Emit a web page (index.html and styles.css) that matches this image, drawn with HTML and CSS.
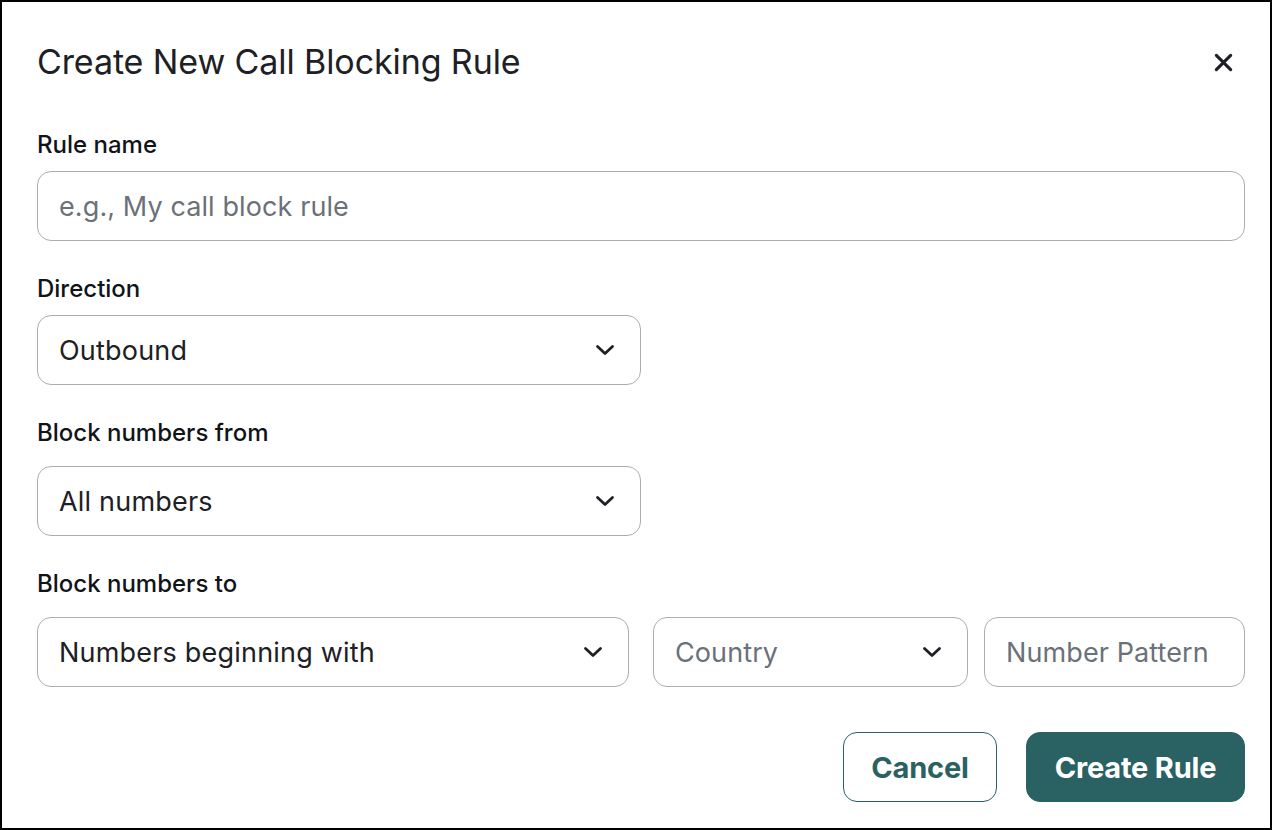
FILE: index.html
```html
<!DOCTYPE html>
<html lang="en">
<head>
<meta charset="utf-8">
<title>Create New Call Blocking Rule</title>
<link rel="stylesheet" href="styles.css">
</head>
<body>
<div class="dialog">
  <div class="dialog-header">
    <h1 class="dialog-title">Create New Call Blocking Rule</h1>
    <button class="close-btn" aria-label="Close">
      <svg viewBox="0 0 20 20" width="21" height="21"><path d="M3.2 3.2 L16.8 16.8 M16.8 3.2 L3.2 16.8" stroke="#1d2024" stroke-width="3" stroke-linecap="round" fill="none"/></svg>
    </button>
  </div>

  <div class="field">
    <label class="field-label">Rule name</label>
    <div class="control control-wide"><span class="placeholder">e.g., My call block rule</span></div>
  </div>

  <div class="field">
    <label class="field-label">Direction</label>
    <div class="control control-half">
      <span class="value">Outbound</span>
      <svg class="chevron" viewBox="0 0 20 12" width="20" height="12"><path d="M2.5 2.5 L10 9.5 L17.5 2.5" stroke="#1d2024" stroke-width="2.8" stroke-linecap="round" stroke-linejoin="round" fill="none"/></svg>
    </div>
  </div>

  <div class="field field-loose">
    <label class="field-label">Block numbers from</label>
    <div class="control control-half">
      <span class="value">All numbers</span>
      <svg class="chevron" viewBox="0 0 20 12" width="20" height="12"><path d="M2.5 2.5 L10 9.5 L17.5 2.5" stroke="#1d2024" stroke-width="2.8" stroke-linecap="round" stroke-linejoin="round" fill="none"/></svg>
    </div>
  </div>

  <div class="field field-loose">
    <label class="field-label">Block numbers to</label>
    <div class="control-row">
      <div class="control control-type">
        <span class="value">Numbers beginning with</span>
        <svg class="chevron" viewBox="0 0 20 12" width="20" height="12"><path d="M2.5 2.5 L10 9.5 L17.5 2.5" stroke="#1d2024" stroke-width="2.8" stroke-linecap="round" stroke-linejoin="round" fill="none"/></svg>
      </div>
      <div class="control control-country">
        <span class="placeholder">Country</span>
        <svg class="chevron" viewBox="0 0 20 12" width="20" height="12"><path d="M2.5 2.5 L10 9.5 L17.5 2.5" stroke="#1d2024" stroke-width="2.8" stroke-linecap="round" stroke-linejoin="round" fill="none"/></svg>
      </div>
      <div class="control control-pattern"><span class="placeholder">Number Pattern</span></div>
    </div>
  </div>

  <div class="dialog-actions">
    <button class="btn btn-secondary">Cancel</button>
    <button class="btn btn-primary">Create Rule</button>
  </div>
</div>
</body>
</html>
```

FILE: styles.css
```css
* { box-sizing: border-box; }

html, body {
  margin: 0;
  padding: 0;
  background: #fff;
}

body {
  font-family: "Inter", "Noto Sans", "Liberation Sans", sans-serif;
  color: #1d2024;
}

.dialog {
  width: 1272px;
  height: 830px;
  border: 2px solid #000;
  padding: 40px 25px 0 35px;
  display: flex;
  flex-direction: column;
  background: #fff;
}

.dialog-header {
  display: flex;
  align-items: center;
  justify-content: space-between;
  height: 40px;
  margin-bottom: 51px;
}

.dialog-title {
  margin: 0;
  font-size: 34px;
  line-height: 40px;
  font-weight: 400;
  letter-spacing: -0.1px;
  color: #1d2024;
}

.close-btn {
  border: 0;
  background: none;
  padding: 0;
  margin-right: 10px;
  width: 24px;
  height: 24px;
  display: flex;
  align-items: center;
  justify-content: center;
  cursor: pointer;
}

.field {
  display: flex;
  flex-direction: column;
  margin-bottom: 36px;
}

.field-label {
  font-size: 24px;
  line-height: 24px;
  font-weight: 500;
  color: #111417;
  margin-bottom: 14px;
  letter-spacing: 0;
}

.field-loose .field-label {
  margin-bottom: 21px;
}

.control {
  height: 70px;
  border: 1px solid #a9aeb4;
  border-radius: 14px;
  display: flex;
  align-items: center;
  justify-content: space-between;
  padding: 0 25px 0 21px;
  font-size: 27px;
  background: #fff;
}

.control-wide { width: 100%; }
.control-half { width: 604px; }

.control-row {
  display: flex;
  gap: 16px;
}

.control-type { width: 592px; margin-right: 8px; }
.control-country { width: 315px; }
.control-pattern { flex: 1; }

.value {
  color: #1d2024;
  letter-spacing: 0.2px;
}

.placeholder {
  color: #6b7178;
  letter-spacing: 0.1px;
}

.chevron { flex: none; }

.dialog-actions {
  display: flex;
  justify-content: flex-end;
  gap: 29px;
  margin-top: 9px;
}

.btn {
  height: 70px;
  border-radius: 14px;
  font-family: inherit;
  font-size: 29px;
  font-weight: 700;
  padding: 0 20px;
  letter-spacing: -0.2px;
  cursor: pointer;
}

.btn-secondary {
  width: 154px;
  background: #fff;
  color: #2a6163;
  border: 1px solid #2a6163;
}

.btn-primary {
  width: 219px;
  background: #2a6163;
  color: #fff;
  border: 1px solid #2a6163;
}
```
